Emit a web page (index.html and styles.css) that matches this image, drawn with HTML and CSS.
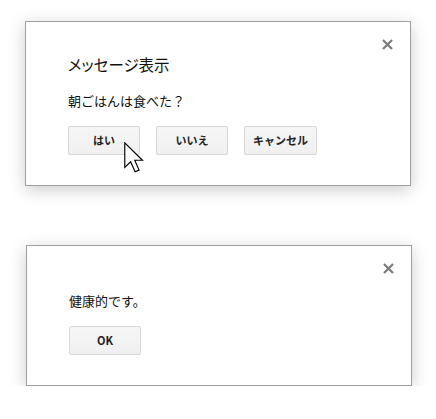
FILE: index.html
```html
<!DOCTYPE html>
<html lang="ja">
<head>
<meta charset="utf-8">
<title>Dialogs</title>
<link rel="stylesheet" href="styles.css">
</head>
<body>
<div class="page">
  <div class="dialog">
    <div class="dialog-close" aria-label="閉じる">
      <svg width="11" height="11" viewBox="0 0 11 11"><path d="M1 1 L10 10 M10 1 L1 10" stroke="#444" stroke-width="2.2" fill="none"/></svg>
    </div>
    <div class="dialog-title">メッセージ表示</div>
    <div class="dialog-content">朝ごはんは食べた？</div>
    <div class="dialog-buttons">
      <button class="btn">はい</button>
      <button class="btn">いいえ</button>
      <button class="btn">キャンセル</button>
    </div>
    <svg class="cursor" width="20" height="31" viewBox="0 0 13 20">
      <path d="M0.5 0.5 L0.5 16.5 L4.3 12.8 L7.2 19.3 L9.8 18.2 L7 11.8 L12 11.8 Z" fill="#fff" stroke="#000" stroke-width="0.75" stroke-linejoin="miter"/>
    </svg>
  </div>

  <div class="dialog dialog--second">
    <div class="dialog-close" aria-label="閉じる">
      <svg width="11" height="11" viewBox="0 0 11 11"><path d="M1 1 L10 10 M10 1 L1 10" stroke="#444" stroke-width="2.2" fill="none"/></svg>
    </div>
    <div class="dialog-title dialog-title--empty"></div>
    <div class="dialog-content">健康的です。</div>
    <div class="dialog-buttons">
      <button class="btn">OK</button>
    </div>
  </div>
</div>
</body>
</html>
```

FILE: styles.css
```css
* { box-sizing: border-box; }

html, body {
  margin: 0;
  padding: 0;
  background: #fff;
}

body {
  font-family: "Noto Sans CJK JP", "Liberation Sans", sans-serif;
  color: #111;
}

.page {
  display: flex;
  flex-direction: column;
  align-items: flex-start;
  padding: 21px 0 0 25px;
  gap: 59px;
}

.dialog {
  position: relative;
  width: 386px;
  background: #fff;
  border: 1px solid #a0a0a0;
  box-shadow: 0 4px 16px rgba(0, 0, 0, 0.2);
  padding: 30px 42px;
}

.dialog--second {
  margin-left: 1px;
}

.dialog-close {
  position: absolute;
  top: 0;
  right: 0;
  width: 45px;
  height: 45px;
  padding: 17px;
  opacity: 0.7;
  display: flex;
}

.dialog-title {
  font-size: 15.5px;
  line-height: 24px;
  height: 24px;
  margin-bottom: 16px;
  font-feature-settings: "palt";
  color: #111;
}

.dialog-title--empty {
  height: 0;
}

.dialog-content {
  font-size: 13px;
  line-height: 18px;
  color: #111;
}

.dialog-buttons {
  margin-top: 16px;
  display: flex;
  gap: 16px;
}

.btn {
  min-width: 72px;
  height: 29px;
  padding: 0 8px;
  border: 1px solid #d8d8d8;
  border-radius: 2px;
  background: linear-gradient(#f6f6f6, #f0f0f0);
  font-family: "Noto Sans CJK JP", "Liberation Sans", sans-serif;
  font-size: 11px;
  font-weight: bold;
  color: #222;
  line-height: 27px;
  text-align: center;
}

.cursor {
  position: absolute;
  left: 98px;
  top: 120px;
}
```
